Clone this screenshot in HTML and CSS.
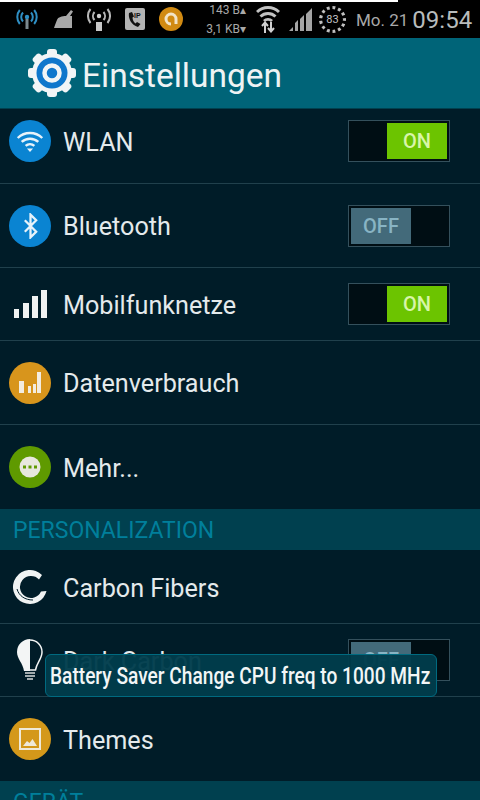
FILE: index.html
```html
<!DOCTYPE html>
<html>
<head>
    <meta charset="UTF-8">
    <meta name="viewport" content="width=device-width, initial-scale=1.0">
    <title>Einstellungen</title>
    <link rel="stylesheet" href="styles.css">
</head>
<body>
<div class="screen">

    <div class="status">
        <svg class="st-antenna" width="22" height="22" viewBox="0 0 22 22" fill="none" stroke="#2f8fc4" stroke-width="2">
            <circle cx="11" cy="9" r="2.2" fill="#2f8fc4" stroke="none"/>
            <path d="M7 4.5a6.5 6.5 0 0 0 0 9M15 4.5a6.5 6.5 0 0 1 0 9M3.8 2a11 11 0 0 0 0 14M18.2 2a11 11 0 0 1 0 14"/>
            <path d="M11 11v10" stroke="#7c8a90" stroke-width="3"/>
        </svg>
        <svg class="st-broom" width="20" height="18" viewBox="0 0 20 18" fill="#a8a8a8">
            <path d="M12 6l5-6 2 1.500-3 4.500h2v12H0c1-3 2-6 3-8 1-3 5-4 9-4z"/>
        </svg>
        <svg class="st-hotspot" width="24" height="23" viewBox="0 0 24 23" fill="none" stroke="#b8b8b8" stroke-width="2">
            <circle cx="12" cy="8" r="2.2" fill="#d0d0d0" stroke="none"/>
            <path d="M7.5 4a6 6 0 0 0 0 8M16.500 4a6 6 0 0 1 0 8M3.500 1a11 11 0 0 0 0 14M20.500 1a11 11 0 0 1 0 14"/>
            <rect x="9" y="14" width="6" height="9" fill="#c8c8c8" stroke="none"/>
        </svg>
        <svg class="st-ip" width="20" height="22" viewBox="0 0 20 22">
            <rect width="20" height="22" rx="2" fill="#b4b4b4"/>
            <path d="M4 5c-1 5 2 12 9 14l2.500-3-3.500-2-1.500 1.500C8.500 14 7.500 11.500 7.500 9.500L9 8.500 7 4z" fill="#111"/>
            <text class="ip-label" x="9" y="10">IP</text>
        </svg>
        <svg class="st-orange" width="24" height="24" viewBox="0 0 24 24" fill="none">
            <circle cx="12" cy="12" r="12" fill="#d18a12"/>
            <path d="M17 17v-5a5 5 0 1 0-5 5" stroke="#f2e4c8" stroke-width="3"/>
        </svg>
        <div class="speed">
            <span>143 B▴</span>
            <span>3,1 KB▾</span>
        </div>
        <svg class="st-wifi" width="24" height="27" viewBox="0 0 24 27" fill="none" stroke="#c2c2c2" stroke-width="3">
            <path d="M1 6a16 16 0 0 1 22 0M4.500 10.500a11 11 0 0 1 15 0M8 15a6 6 0 0 1 8 0"/>
            <path d="M9 27v-8M12 20l-3-3.500-3 3.500M15 16v8M12 22l3 3.500 3-3.500" stroke="#d0d0d0" stroke-width="2"/>
        </svg>
        <svg class="st-signal" width="24" height="23" viewBox="0 0 24 23" fill="#a4a4a4">
            <path d="M0 23l4-4v4zM6 23v-8l3-3v11zM11 23V11l4-4v16zM17 23V6l6-6v23z"/>
        </svg>
        <div class="battery">83</div>
        <span class="date">Mo. 21</span>
        <span class="clock">09:54</span>
    </div>

    <div class="header">
        <svg class="gear" width="48" height="48" viewBox="0 0 48 48">
            <g fill="#f2f5f6">
                <circle cx="24" cy="24" r="20"/>
                <rect x="19" y="0" width="10" height="48" rx="3"/>
                <rect x="19" y="0" width="10" height="48" rx="3" transform="rotate(45 24 24)"/>
                <rect x="19" y="0" width="10" height="48" rx="3" transform="rotate(90 24 24)"/>
                <rect x="19" y="0" width="10" height="48" rx="3" transform="rotate(135 24 24)"/>
            </g>
            <circle cx="24" cy="24" r="15.500" fill="#0f77cc"/>
            <circle cx="24" cy="24" r="7.500" fill="none" stroke="#f2f5f6" stroke-width="4.500"/>
        </svg>
        <span class="title">Einstellungen</span>
    </div>

    <div class="row row-first">
        <div class="disc disc-blue">
            <svg width="28" height="21" viewBox="0 0 30 24" fill="none" stroke="#e6f2fa" stroke-width="2.800">
                <path d="M1 8a20 20 0 0 1 28 0M5.500 12.500a14 14 0 0 1 19 0M10 17a7.500 7.500 0 0 1 10 0"/>
                <path d="M11.500 20h7L15 24z" fill="#e6f2fa" stroke="none"/>
            </svg>
        </div>
        <span class="label">WLAN</span>
        <div class="switch on"><div class="thumb">ON</div></div>
    </div>

    <div class="row row-2">
        <div class="disc disc-blue">
            <svg width="15" height="26" viewBox="0 0 18 32" fill="none" stroke="#e6f2fa" stroke-width="2.800">
                <path d="M2 9l14 14-7 7V2l7 7L2 23"/>
            </svg>
        </div>
        <span class="label">Bluetooth</span>
        <div class="switch off"><div class="thumb">OFF</div></div>
    </div>

    <div class="row row-3">
        <div class="disc">
            <svg width="33" height="28" viewBox="0 0 33 28" fill="#f0f2f2">
                <rect x="0" y="19" width="5" height="9"/>
                <rect x="9" y="13" width="6" height="15"/>
                <rect x="18" y="6" width="6" height="22"/>
                <rect x="27" y="0" width="6" height="28"/>
            </svg>
        </div>
        <span class="label">Mobilfunknetze</span>
        <div class="switch on"><div class="thumb">ON</div></div>
    </div>

    <div class="row row-4">
        <div class="disc disc-orange">
            <svg width="22" height="21" viewBox="0 0 22 21" fill="#f3ece0">
                <rect x="0" y="9" width="5" height="12"/>
                <rect x="9" y="14" width="3" height="7"/>
                <rect x="14" y="12" width="3" height="9"/>
                <rect x="18" y="0" width="4" height="21"/>
            </svg>
        </div>
        <span class="label">Datenverbrauch</span>
    </div>

    <div class="row row-5">
        <div class="disc disc-green">
            <svg width="22" height="22" viewBox="0 0 22 22">
                <circle cx="11" cy="11" r="10.500" fill="#e8e8de"/>
                <rect x="4" y="9.500" width="3" height="3" fill="#5f9a00"/>
                <rect x="9.500" y="9.500" width="3" height="3" fill="#5f9a00"/>
                <rect x="15" y="9.500" width="3" height="3" fill="#5f9a00"/>
            </svg>
        </div>
        <span class="label">Mehr...</span>
    </div>

    <div class="section">PERSONALIZATION</div>

    <div class="row row-6">
        <div class="disc">
            <svg width="36" height="36" viewBox="0 0 36 36">
                <path d="M30 6A17 17 0 1 0 34.500 22L29 22.500A11 11 0 1 1 27 10.500Z" fill="#f0f3f3"/>
                <path d="M5 20C7 27 13 31 21 31" fill="none" stroke="#001c28" stroke-width="1"/>
            </svg>
        </div>
        <span class="label label-low">Carbon Fibers</span>
    </div>

    <div class="row row-7">
        <div class="disc">
            <svg width="26" height="42" viewBox="0 0 26 42">
                <path d="M13 0a13 13 0 0 0-13 13c0 7 6 11 7 19h6z" fill="#f3f5f5"/>
                <path d="M13 1a12 12 0 0 1 12 12c0 7-5 10-6.500 18H13" fill="none" stroke="#f3f5f5" stroke-width="1.500"/>
                <path d="M8 34h10M8 37h10M10 40h6" stroke="#d8dcdc" stroke-width="1.500"/>
            </svg>
        </div>
        <span class="label">Dark Carbon</span>
        <div class="switch off"><div class="thumb">OFF</div></div>
    </div>

    <div class="row row-8">
        <div class="disc disc-yellow">
            <svg width="22" height="22" viewBox="0 0 22 22" fill="none">
                <rect x="1" y="1" width="20" height="20" stroke="#efe9d8" stroke-width="2"/>
                <path d="M4 18l4-5 2.500 2 3-4 4.500 7z" fill="#efe9d8"/>
            </svg>
        </div>
        <span class="label">Themes</span>
    </div>

    <div class="section">GERÄT</div>

    <div class="toast"><span class="toast-text">Battery Saver Change CPU freq to 1000 MHz</span></div>
</div>
</body>
</html>
```

FILE: styles.css
```css
html, body {
    margin: 0;
    padding: 0;
    background: #001c28;
}

.screen {
    position: relative;
    width: 480px;
    height: 800px;
    overflow: hidden;
    font-family: Roboto, "Liberation Sans", sans-serif;
    background: #001c28;
}

/* status bar */
.status {
    position: relative;
    display: flex;
    align-items: center;
    height: 38px;
    background: #000;
    color: #b4b4b4;
}

.status::before {
    content: "";
    position: absolute;
    left: 0;
    top: 0;
    width: 398px;
    height: 2px;
    background: #fff;
}

.st-antenna { margin-left: 16px; }
.st-broom { margin-left: 16px; }
.st-hotspot { margin-left: 13px; }
.st-ip { margin-left: 14px; }
.st-orange { margin-left: 14px; }
.st-wifi { margin-left: 10px; }
.st-signal { margin-left: 9px; }

.ip-label {
    font-family: "Liberation Sans", sans-serif;
    font-size: 7px;
    font-weight: bold;
    fill: #111;
}

.speed {
    display: flex;
    flex-direction: column;
    align-items: flex-end;
    width: 48px;
    margin-left: 15px;
    padding-top: 1px;
    font-size: 12px;
    line-height: 19px;
    color: #a8a8a8;
}

.battery {
    width: 21px;
    height: 21px;
    margin-left: 6px;
    border: 3px dotted #c0c0c0;
    border-radius: 50%;
    font-size: 11px;
    line-height: 21px;
    text-align: center;
    color: #c4c4c4;
}

.date {
    margin-left: 10px;
    padding-top: 2px;
    font-size: 17px;
    color: #a8a8a8;
}

.clock {
    margin-left: 4px;
    padding-top: 2px;
    font-size: 24px;
    color: #b8bcbc;
}

/* action bar */
.header {
    display: flex;
    align-items: center;
    height: 70px;
    padding-left: 28px;
    background: #006478;
    border-bottom: 1px solid #00414f;
}

.title {
    margin-left: 6px;
    margin-top: 5px;
    font-size: 33.500px;
    color: #eef3f4;
}

/* list */
.row {
    display: flex;
    align-items: center;
    box-sizing: border-box;
    padding-left: 9px;
    border-bottom: 1px solid #20404c;
}

.row-first { height: 75px; padding-bottom: 10px; }
.row-2 { height: 84px; }
.row-3 { height: 73px; }
.row-4 { height: 84px; }
.row-5 { height: 84px; border-bottom: 0; }
.row-6 { height: 74px; }
.row-7 { height: 73px; }
.row-8 { height: 84px; border-bottom: 0; }

.disc {
    display: flex;
    align-items: center;
    justify-content: center;
    flex: none;
    width: 42px;
    height: 42px;
    border-radius: 50%;
}

.disc-blue { background: #0a84d2; }
.disc-orange { background: #d8951c; }
.disc-green { background: #5f9a00; }
.disc-yellow { background: #d4981a; }

.label {
    margin-left: 12px;
    margin-top: 2px;
    font-size: 25.200px;
    color: #e4eaec;
}

.label-low {
    margin-top: 4px;
}

/* toggle */
.switch {
    display: flex;
    box-sizing: border-box;
    width: 102px;
    height: 42px;
    margin-left: auto;
    margin-right: 30px;
    padding: 2px;
    background: #000e14;
    border: 1px solid #34505c;
}

.switch.on { justify-content: flex-end; }

.thumb {
    width: 60px;
    font-size: 20px;
    font-weight: 500;
    line-height: 36px;
    text-align: center;
}

.on .thumb {
    background: #6cc400;
    color: #d8f5a8;
}

.off .thumb {
    background: #436a7a;
    color: #88b4c4;
}

/* category headers */
.section {
    box-sizing: border-box;
    height: 41px;
    padding-left: 13px;
    font-size: 23px;
    line-height: 43px;
    background: #00404f;
    color: #007f9b;
}

/* toast over the list */
.toast {
    position: absolute;
    left: 45px;
    top: 654px;
    box-sizing: border-box;
    width: 392px;
    height: 43px;
    border: 1px solid #006a80;
    border-radius: 6px;
    background: rgba(0, 60, 76, 0.96);
    font-size: 24px;
    font-weight: 500;
    line-height: 43px;
    color: #f2f6f6;
    white-space: nowrap;
}

.toast-text {
    display: inline-block;
    margin-left: 4px;
    transform: scaleX(0.797);
    transform-origin: left center;
}
```
